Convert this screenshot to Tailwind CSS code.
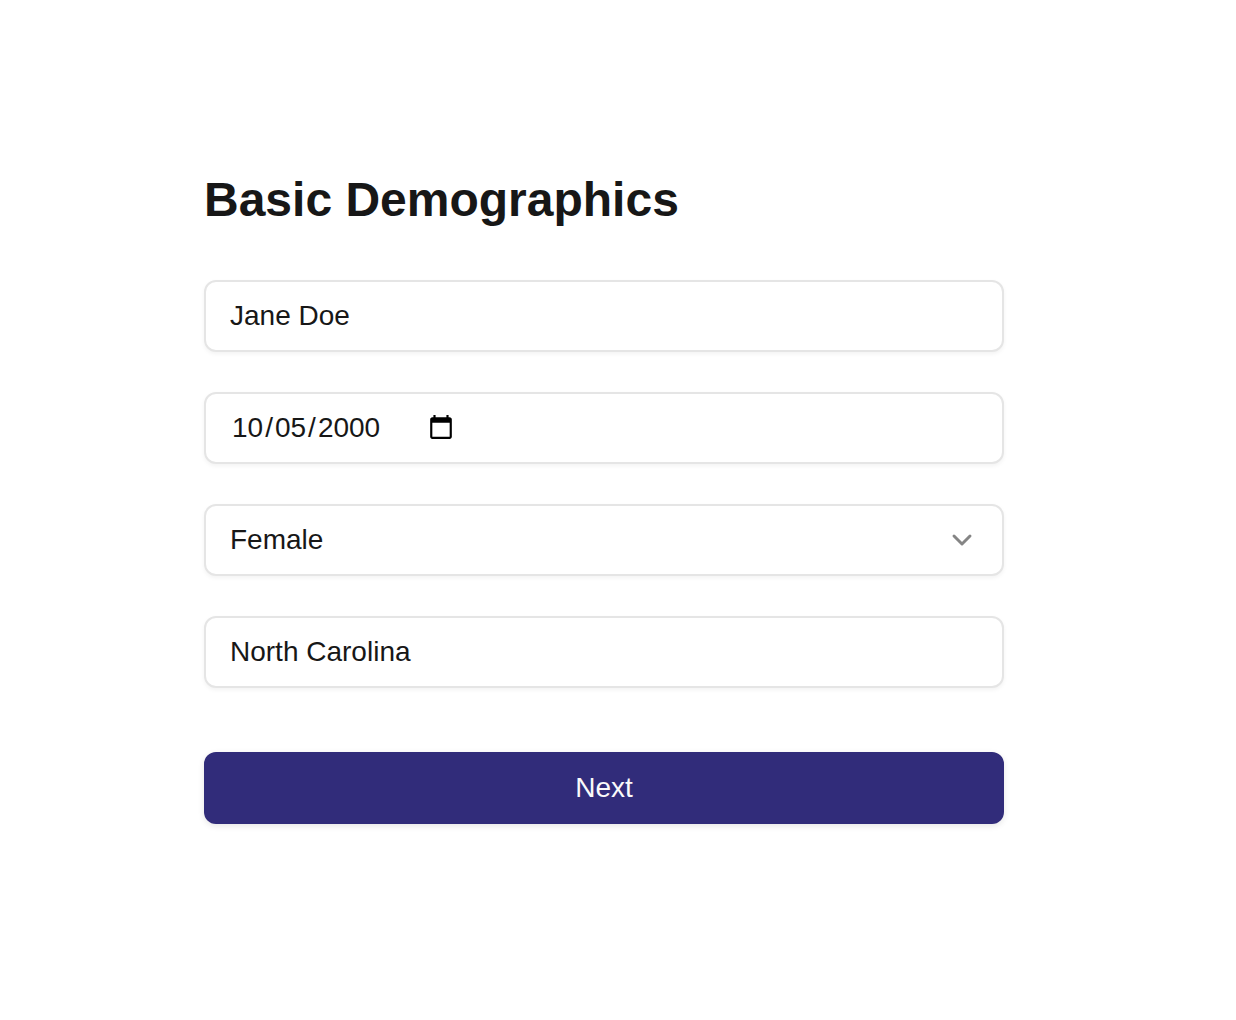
<!DOCTYPE html>
<html lang="en-US">
<head>
<meta charset="utf-8">
<meta name="viewport" content="width=device-width, initial-scale=1">
<title>Basic Demographics</title>
<script src="https://cdn.jsdelivr.net/npm/@tailwindcss/browser@4"></script>
</head>
<body class="min-h-screen bg-white font-['Liberation_Sans',Arial,sans-serif] text-[28px] leading-10 text-[#171717]">
<main class="mx-auto w-full max-w-[828px] pt-[172px] pr-7 pb-12">
  <h1 class="text-5xl leading-14 font-bold">Basic Demographics</h1>
  <form class="mt-[52px] flex flex-col gap-10">
    <input type="text" aria-label="Full name" value="Jane Doe" class="h-18 w-full rounded-xl border-2 border-[#e5e5e5] bg-white px-6 shadow-[0_2px_4px_rgba(0,0,0,0.05)] outline-none">
    <input type="date" aria-label="Date of birth" value="2000-10-05" class="flex h-18 w-full items-center rounded-xl border-2 border-[#e5e5e5] bg-white px-6 shadow-[0_2px_4px_rgba(0,0,0,0.05)] outline-none [&::-webkit-calendar-picker-indicator]:ml-1 [&::-webkit-calendar-picker-indicator]:size-7 [&::-webkit-calendar-picker-indicator]:p-0 [&::-webkit-datetime-edit-month-field]:px-[2px] [&::-webkit-datetime-edit-day-field]:px-[2px] [&::-webkit-datetime-edit-year-field]:px-[2px]">
    <div class="relative">
      <select aria-label="Sex" class="h-18 w-full appearance-none rounded-xl border-2 border-[#e5e5e5] bg-white px-6 shadow-[0_2px_4px_rgba(0,0,0,0.05)] outline-none">
        <option selected>Female</option>
        <option>Male</option>
        <option>Other</option>
      </select>
      <svg class="pointer-events-none absolute top-5 right-[26px] size-8 text-[#858585]" viewBox="0 0 24 24" fill="none" stroke="currentColor" stroke-width="2.2" stroke-linecap="round" stroke-linejoin="round" aria-hidden="true"><path d="m6 9 6 6 6-6"/></svg>
    </div>
    <input type="text" aria-label="State" value="North Carolina" class="h-18 w-full rounded-xl border-2 border-[#e5e5e5] bg-white px-6 shadow-[0_2px_4px_rgba(0,0,0,0.05)] outline-none">
    <button type="button" class="mt-6 h-18 w-full rounded-xl bg-[#312c7a] text-[#fafafa] shadow-[0_2px_6px_rgba(0,0,0,0.1)]">Next</button>
  </form>
</main>
</body>
</html>
